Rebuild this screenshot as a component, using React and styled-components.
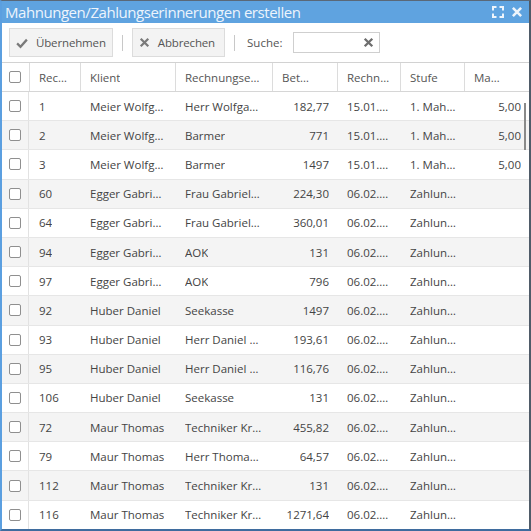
import styled, { createGlobalStyle } from "styled-components";

const GlobalStyle = createGlobalStyle`
  html, body {
    margin: 0;
    padding: 0;
    background: #ffffff;
  }
  * {
    box-sizing: border-box;
  }
`;

// header titles are shortened the same way the grid shows them
const columns = [
  { key: "nr", title: "Rec…", full: "Rechnungsnummer", width: "51px" },
  { key: "klient", title: "Klient", full: "Klient", width: "95px" },
  { key: "empf", title: "Rechnungse…", full: "Rechnungsempfänger", width: "97px" },
  { key: "betrag", title: "Bet…", full: "Betrag", width: "65px", right: true },
  { key: "datum", title: "Rechn…", full: "Rechnungsdatum", width: "63px" },
  { key: "stufe", title: "Stufe", full: "Stufe", width: "64px" },
  { key: "gebuehr", title: "Ma…", full: "Mahngebühr", width: "1fr", right: true },
];

const rows = [
  { nr: "1", klient: "Meier Wolfgang", empf: "Herr Wolfgang Meier", betrag: "182,77", datum: "15.01.2019", stufe: "1. Mahnung", gebuehr: "5,00" },
  { nr: "2", klient: "Meier Wolfgang", empf: "Barmer", betrag: "771", datum: "15.01.2019", stufe: "1. Mahnung", gebuehr: "5,00" },
  { nr: "3", klient: "Meier Wolfgang", empf: "Barmer", betrag: "1497", datum: "15.01.2019", stufe: "1. Mahnung", gebuehr: "5,00" },
  { nr: "60", klient: "Egger Gabriele", empf: "Frau Gabriele Egger", betrag: "224,30", datum: "06.02.2019", stufe: "Zahlungserinnerung", gebuehr: "" },
  { nr: "64", klient: "Egger Gabriele", empf: "Frau Gabriele Egger", betrag: "360,01", datum: "06.02.2019", stufe: "Zahlungserinnerung", gebuehr: "" },
  { nr: "94", klient: "Egger Gabriele", empf: "AOK", betrag: "131", datum: "06.02.2019", stufe: "Zahlungserinnerung", gebuehr: "" },
  { nr: "97", klient: "Egger Gabriele", empf: "AOK", betrag: "796", datum: "06.02.2019", stufe: "Zahlungserinnerung", gebuehr: "" },
  { nr: "92", klient: "Huber Daniel", empf: "Seekasse", betrag: "1497", datum: "06.02.2019", stufe: "Zahlungserinnerung", gebuehr: "" },
  { nr: "93", klient: "Huber Daniel", empf: "Herr Daniel Huber", betrag: "193,61", datum: "06.02.2019", stufe: "Zahlungserinnerung", gebuehr: "" },
  { nr: "95", klient: "Huber Daniel", empf: "Herr Daniel Huber", betrag: "116,76", datum: "06.02.2019", stufe: "Zahlungserinnerung", gebuehr: "" },
  { nr: "106", klient: "Huber Daniel", empf: "Seekasse", betrag: "131", datum: "06.02.2019", stufe: "Zahlungserinnerung", gebuehr: "" },
  { nr: "72", klient: "Maur Thomas", empf: "Techniker Krankenkasse", betrag: "455,82", datum: "06.02.2019", stufe: "Zahlungserinnerung", gebuehr: "" },
  { nr: "79", klient: "Maur Thomas", empf: "Herr Thomas Maur", betrag: "64,57", datum: "06.02.2019", stufe: "Zahlungserinnerung", gebuehr: "" },
  { nr: "112", klient: "Maur Thomas", empf: "Techniker Krankenkasse", betrag: "131", datum: "06.02.2019", stufe: "Zahlungserinnerung", gebuehr: "" },
  { nr: "116", klient: "Maur Thomas", empf: "Techniker Krankenkasse", betrag: "1271,64", datum: "06.02.2019", stufe: "Zahlungserinnerung", gebuehr: "" },
];

const gridCols = "27px " + columns.map((c) => c.width).join(" ");

const CheckIcon = ({ size = 12, color = "#7a7a7a" }) => (
  <svg width={size} height={size} viewBox="0 0 16 16">
    <path d="M1.5 8.5 L6 13 L14.5 3.5" fill="none" stroke={color} strokeWidth="3" />
  </svg>
);

const CrossIcon = ({ size = 11, color = "#7a7a7a", weight = 3.2 }) => (
  <svg width={size} height={size} viewBox="0 0 16 16">
    <path d="M2.5 2.5 L13.5 13.5 M13.5 2.5 L2.5 13.5" stroke={color} strokeWidth={weight} />
  </svg>
);

const ExpandIcon = () => (
  <svg width="12" height="12" viewBox="0 0 12 12">
    <path
      d="M1 4.5 V1 H4.5 M7.5 1 H11 V4.5 M11 7.5 V11 H7.5 M4.5 11 H1 V7.5"
      fill="none"
      stroke="#eef4fb"
      strokeWidth="2"
    />
  </svg>
);

function App() {
  return (
    <>
      <GlobalStyle />
      <Window>
        <TitleBar>
          <Title>Mahnungen/Zahlungserinnerungen erstellen</Title>
          <TitleTools>
            <ExpandIcon />
            <CrossIcon size={12} color="#eef4fb" weight={3.4} />
          </TitleTools>
        </TitleBar>
        <Toolbar>
          <ToolButton>
            <CheckIcon />
            Übernehmen
          </ToolButton>
          <Divider />
          <ToolButton $pad={9}>
            <CrossIcon />
            Abbrechen
          </ToolButton>
          <Divider />
          <SearchLabel>Suche:</SearchLabel>
          <SearchBox>
            <SearchInput />
            <CrossIcon size={11} color="#6e6e6e" weight={3.4} />
          </SearchBox>
        </Toolbar>
        <Grid>
          <HeaderRow>
            <CheckCell $header>
              <Box />
            </CheckCell>
            {columns.map((c) => (
              <HeadCell key={c.key} title={c.full}>
                <Ellipsis>{c.title}</Ellipsis>
              </HeadCell>
            ))}
          </HeaderRow>
          <Body>
            {rows.map((r, i) => (
              <Row key={r.nr} $striped={i % 2 === 1}>
                <CheckCell>
                  <Box />
                </CheckCell>
                {columns.map((c) => (
                  <Cell key={c.key} $right={c.right}>
                    <Ellipsis>{r[c.key]}</Ellipsis>
                  </Cell>
                ))}
              </Row>
            ))}
            <ScrollThumb />
          </Body>
        </Grid>
      </Window>
    </>
  );
}

export default App;

const Window = styled.div`
  width: 531px;
  height: 531px;
  display: flex;
  flex-direction: column;
  overflow: hidden;
  border-top: 1px solid #5a6878;
  border-left: 2px solid #5b9fe0;
  border-right: 2px solid #4f5b68;
  border-bottom: 2px solid #3f6c9e;
  font-family: "Open Sans", "Liberation Sans", sans-serif;
  background: #ffffff;
`;

const TitleBar = styled.div`
  height: 22px;
  flex: none;
  display: flex;
  align-items: center;
  justify-content: space-between;
  background: #5fa3e0;
  padding: 0 6px 0 3px;
  margin-left: -2px;
`;

const Title = styled.div`
  color: #edf4fc;
  font-size: 15px;
  letter-spacing: -0.45px;
  line-height: 22px;
  padding-left: 2px;
`;

const TitleTools = styled.div`
  display: flex;
  align-items: center;
  gap: 7px;
`;

const Toolbar = styled.div`
  height: 40px;
  flex: none;
  display: flex;
  align-items: center;
  padding: 0 0 0 7px;
  border-bottom: 1px solid #d2d2d2;
`;

const ToolButton = styled.div`
  height: 29px;
  display: flex;
  align-items: center;
  gap: 8px;
  padding: 0 ${(p) => p.$pad || 6}px 0 6px;
  background: #f3f3f3;
  border: 1px solid #dcdcdc;
  color: #555555;
  font-size: 11.5px;
  letter-spacing: -0.15px;
`;

const Divider = styled.div`
  width: 1px;
  height: 16px;
  background: #c8c8c8;
  margin: 0 9px;
`;

const SearchLabel = styled.span`
  font-size: 11.5px;
  color: #555555;
  margin: 0 11px 0 3px;
`;

const SearchBox = styled.div`
  width: 87px;
  height: 21px;
  display: flex;
  align-items: center;
  padding-right: 5px;
  border: 1px solid #cfcfcf;
  background: #ffffff;
`;

const SearchInput = styled.div`
  flex: 1;
`;

const Grid = styled.div`
  flex: 1;
  display: flex;
  flex-direction: column;
  min-height: 0;
`;

const HeaderRow = styled.div`
  display: grid;
  grid-template-columns: ${gridCols};
  height: 29px;
  flex: none;
  border-bottom: 1px solid #d6d6d6;
`;

const HeadCell = styled.div`
  display: flex;
  align-items: center;
  padding: 0 4px 0 9px;
  border-left: 1px solid #dcdcdc;
  font-size: 11.5px;
  color: #555555;
  min-width: 0;
`;

const Body = styled.div`
  position: relative;
  flex: 1;
  overflow: hidden;
`;

const Row = styled.div`
  display: grid;
  grid-template-columns: ${gridCols};
  height: 29.2px;
  border-bottom: 1px solid #e6e6e6;
  background: ${(p) => (p.$striped ? "#f4f4f4" : "#ffffff")};
`;

const CheckCell = styled.div`
  display: flex;
  align-items: center;
  justify-content: center;
  padding-right: 1px;
  border-right: ${(p) => (p.$header ? "none" : "1px solid #e2e2e2")};
`;

const Box = styled.div`
  width: 12px;
  height: 12px;
  border: 1px solid #8f8f8f;
  border-radius: 2px;
  background: #ffffff;
`;

const Cell = styled.div`
  display: flex;
  align-items: center;
  justify-content: ${(p) => (p.$right ? "flex-end" : "flex-start")};
  padding: ${(p) => (p.$right ? "0 8px 0 9px" : "0 8px 0 10px")};
  font-size: 11.5px;
  color: #444444;
  min-width: 0;
`;

const Ellipsis = styled.span`
  white-space: nowrap;
  overflow: hidden;
  text-overflow: ellipsis;
  min-width: 0;
`;

const ScrollThumb = styled.div`
  position: absolute;
  right: 3px;
  top: 11px;
  width: 2px;
  height: 47px;
  background: #8a8a8a;
`;
